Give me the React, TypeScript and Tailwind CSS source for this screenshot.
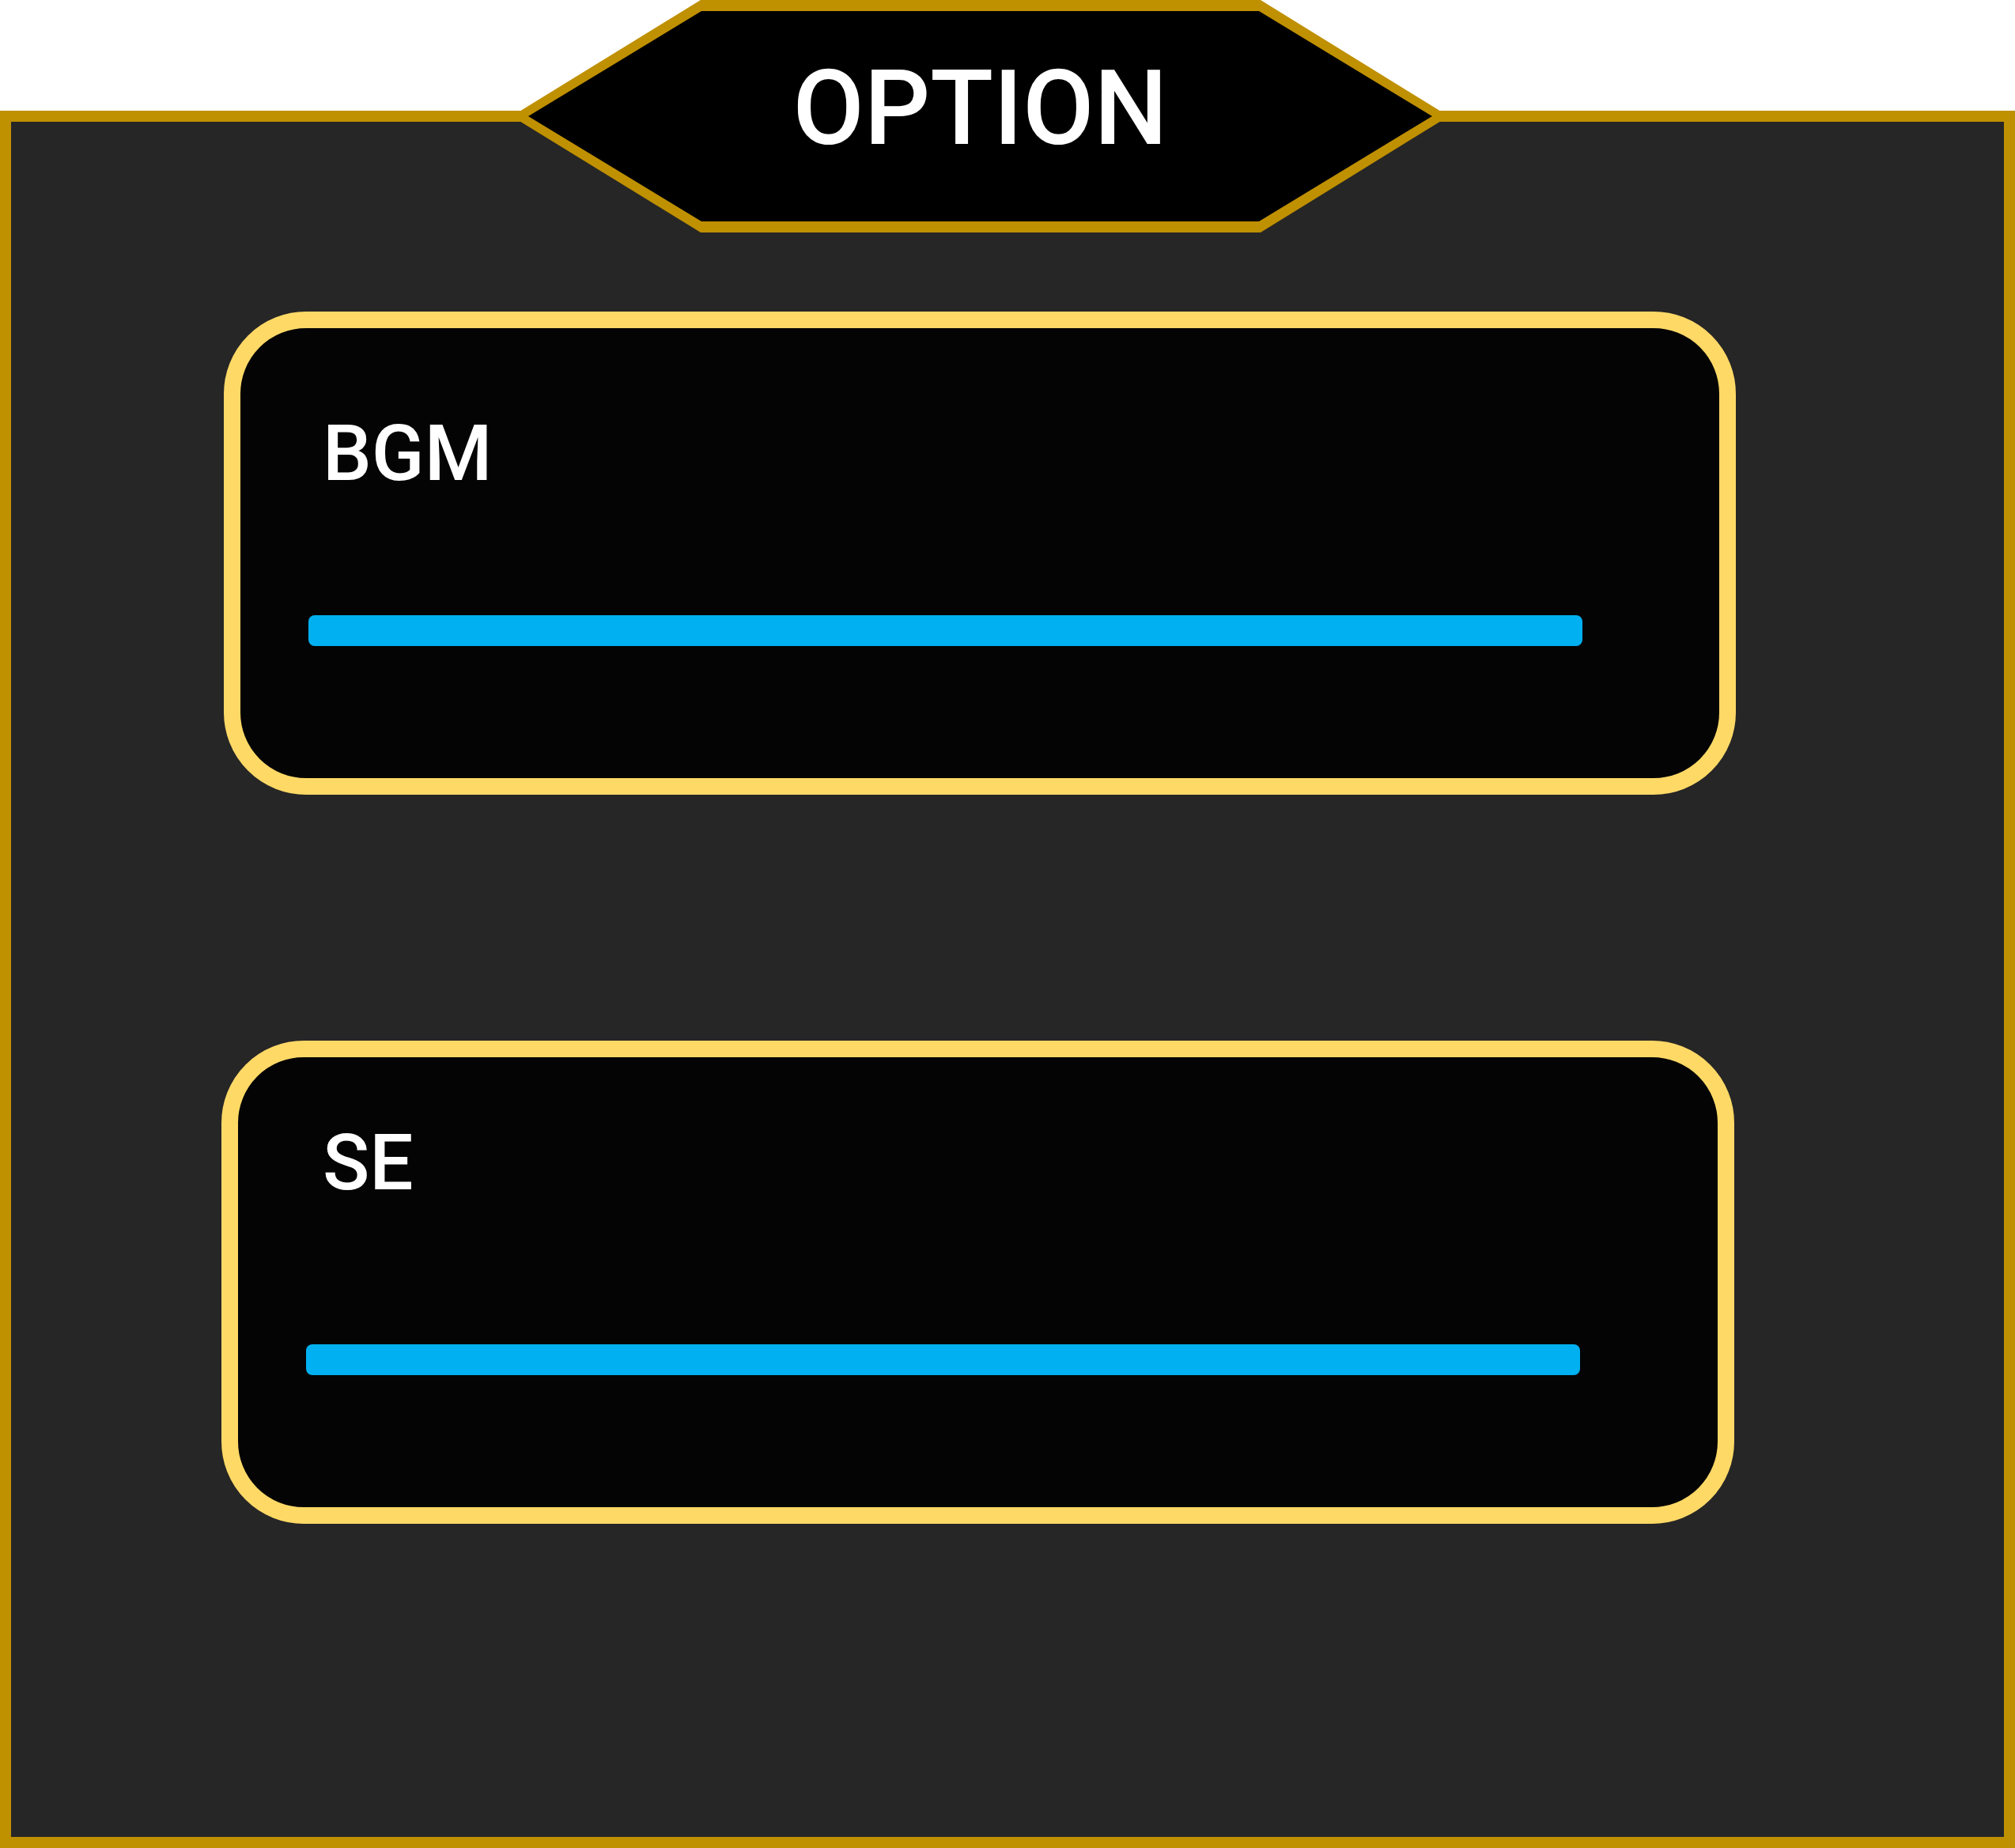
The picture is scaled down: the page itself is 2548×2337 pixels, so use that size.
import * as React from "react"

interface VolumeCardProps {
  label: string
  className?: string
  labelClass?: string
  barClass?: string
}

function VolumeCard({ label, className, labelClass, barClass }: VolumeCardProps) {
  return (
    <div
      className={`h-[611px] w-[1912px] rounded-[104px] border-[21px] border-[#ffd966] bg-[#040404] ${className ?? ""}`}
    >
      <div className={`text-[98px] leading-none font-medium text-white ${labelClass ?? ""}`}>{label}</div>
      <div className={`h-[39px] w-[1611px] rounded-[8px] bg-[#00b0f0] ${barClass ?? ""}`} />
    </div>
  )
}

function TitlePlate() {
  return (
    <div className="absolute left-[647px] top-0 h-[294px] w-[1185px]">
      <svg width="1185" height="294" viewBox="0 0 1185 294" className="absolute inset-0">
        <polygon points="0,147 239,0 947,0 1185,147 947,294 239,294" fill="#bf9000" />
        <polygon points="21,147 240,14 945,14 1164,147 945,280 240,280" fill="#000000" />
      </svg>
      <div className="relative flex h-full items-center justify-center pb-[19px] text-[131px] leading-none font-medium text-white">
        OPTION
      </div>
    </div>
  )
}

export default function App() {
  return (
    <div className="relative h-[2337px] w-[2548px] bg-white pt-[140px] font-['Roboto',sans-serif]">
      <div className="flex h-[2197px] w-full flex-col border-[14px] border-[#bf9000] bg-[#262626]">
        <VolumeCard label="BGM" className="ml-[269px] mt-[240px]" labelClass="ml-[104px] mt-[110px]" barClass="ml-[86px] mt-[155px]" />
        <VolumeCard label="SE" className="ml-[266px] mt-[311px] w-[1913px]" labelClass="ml-[107px] mt-[85px]" barClass="ml-[86px] mt-[180px]" />
      </div>
      <TitlePlate />
    </div>
  )
}
